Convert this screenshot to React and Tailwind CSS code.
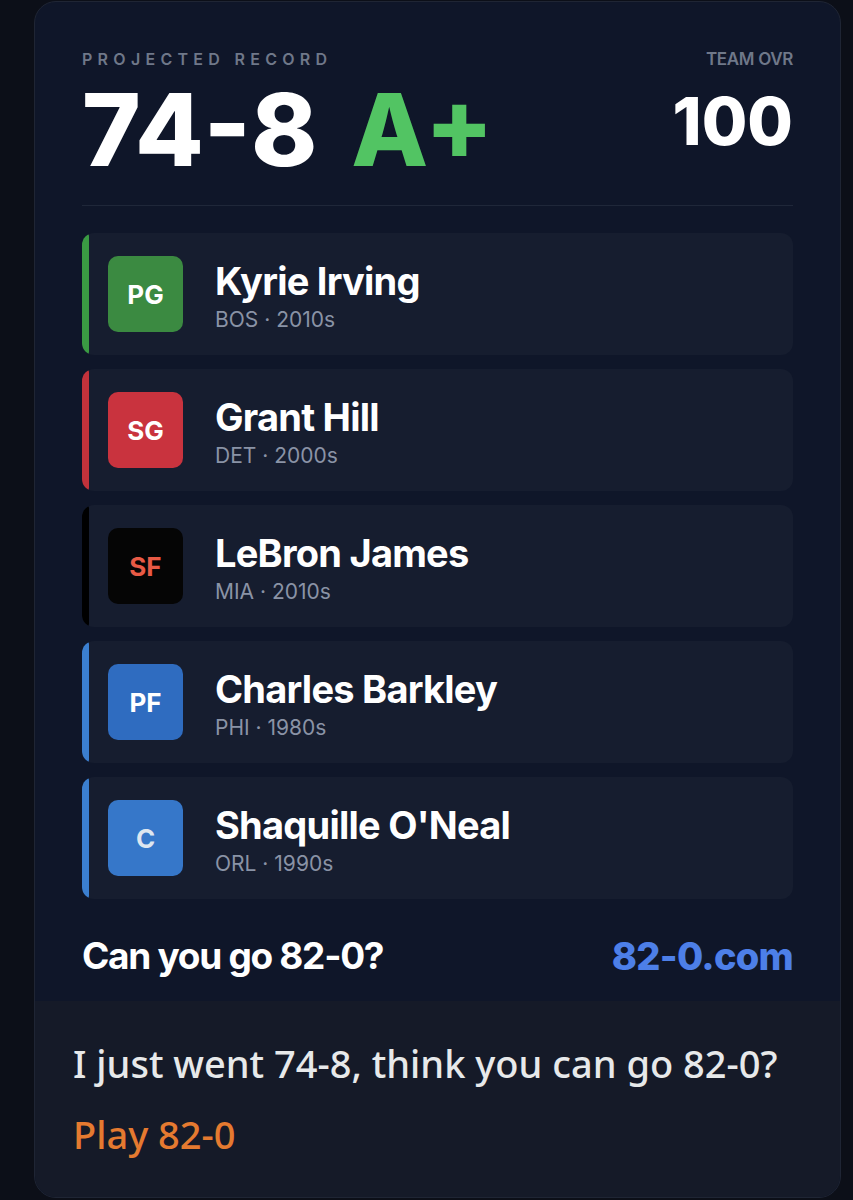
const players = [
  { pos: 'PG', name: 'Kyrie Irving', team: 'BOS', era: '2010s', bar: 'bg-[#3a9a43]', badge: 'bg-[#3b8a41] text-white' },
  { pos: 'SG', name: 'Grant Hill', team: 'DET', era: '2000s', bar: 'bg-[#c2323b]', badge: 'bg-[#c9333e] text-white' },
  { pos: 'SF', name: 'LeBron James', team: 'MIA', era: '2010s', bar: 'bg-black', badge: 'bg-[#050505] text-[#e85a45]' },
  { pos: 'PF', name: 'Charles Barkley', team: 'PHI', era: '1980s', bar: 'bg-[#3b7fd0]', badge: 'bg-[#2f6cc0] text-white' },
  { pos: 'C', name: "Shaquille O'Neal", team: 'ORL', era: '1990s', bar: 'bg-[#3b7fd0]', badge: 'bg-[#3677c9] text-[#dde6f0]' },
];

function PlayerRow({ player }) {
  return (
    <div className="flex h-[122px] overflow-hidden rounded-xl bg-[#161d2f]">
      <div className={`w-[7px] shrink-0 rounded-full ${player.bar}`} />
      <div className="flex items-center gap-[32px] pl-[19px]">
        <div className={`grid h-[76px] w-[75px] place-items-center rounded-[10px] text-[26px] font-bold ${player.badge}`}>
          {player.pos}
        </div>
        <div className="flex flex-col pt-[4px]">
          <span className="text-[38px] leading-[46px] font-bold tracking-[-0.02em] text-white">{player.name}</span>
          <span className="mt-[2px] text-[21px] leading-[28px] text-[#8a93a6]">
            {player.team} · {player.era}
          </span>
        </div>
      </div>
    </div>
  );
}

export default function App() {
  return (
    <div className="min-h-[1200px] bg-[#0c0f18] pt-px font-['Inter',sans-serif]">
      <div className="ml-[34px] w-[807px] overflow-hidden rounded-[22px] border border-[#1f2534] bg-[#0f1629]">
        <div className="px-[47px] pt-[47px] pb-[25px]">
          <div className="flex justify-between">
            <div className="flex flex-col">
              <span className="text-[16px] leading-[20px] font-semibold tracking-[0.33em] text-[#6f7889]">PROJECTED RECORD</span>
              <div className="mt-[11px] flex text-[100px] leading-none font-extrabold text-white">
                <span>74-8</span>
                <span className="ml-[34px] text-[#52c463]">A+</span>
              </div>
            </div>
            <div className="flex flex-col items-end">
              <span className="text-[17px] leading-[20px] font-semibold tracking-[-0.02em] text-[#6f7889]">TEAM OVR</span>
              <span className="mt-[19px] text-[66px] leading-none font-extrabold text-white">100</span>
            </div>
          </div>

          <div className="mt-[25px] h-px bg-[#1f2739]" />

          <div className="mt-[27px] flex flex-col gap-[14px]">
            {players.map((p) => (
              <PlayerRow key={p.pos} player={p} />
            ))}
          </div>

          <div className="mt-[37px] flex h-[40px] items-center justify-between">
            <span className="text-[37px] font-bold tracking-[-0.035em] text-white">Can you go 82-0?</span>
            <span className="text-[38px] font-extrabold tracking-[-0.02em] text-[#4d7fe8]">82-0.com</span>
          </div>
        </div>

        <div className="h-[196px] bg-[#151a28] pt-[36px] pl-[38px] font-['Noto_Sans',sans-serif] text-[38px] leading-[53px] font-medium">
          <p className="text-[#e7e9ea]">I just went 74-8, think you can go 82-0?</p>
          <p className="mt-[18px] text-[#e57a30]">Play 82-0</p>
        </div>
      </div>
    </div>
  );
}
